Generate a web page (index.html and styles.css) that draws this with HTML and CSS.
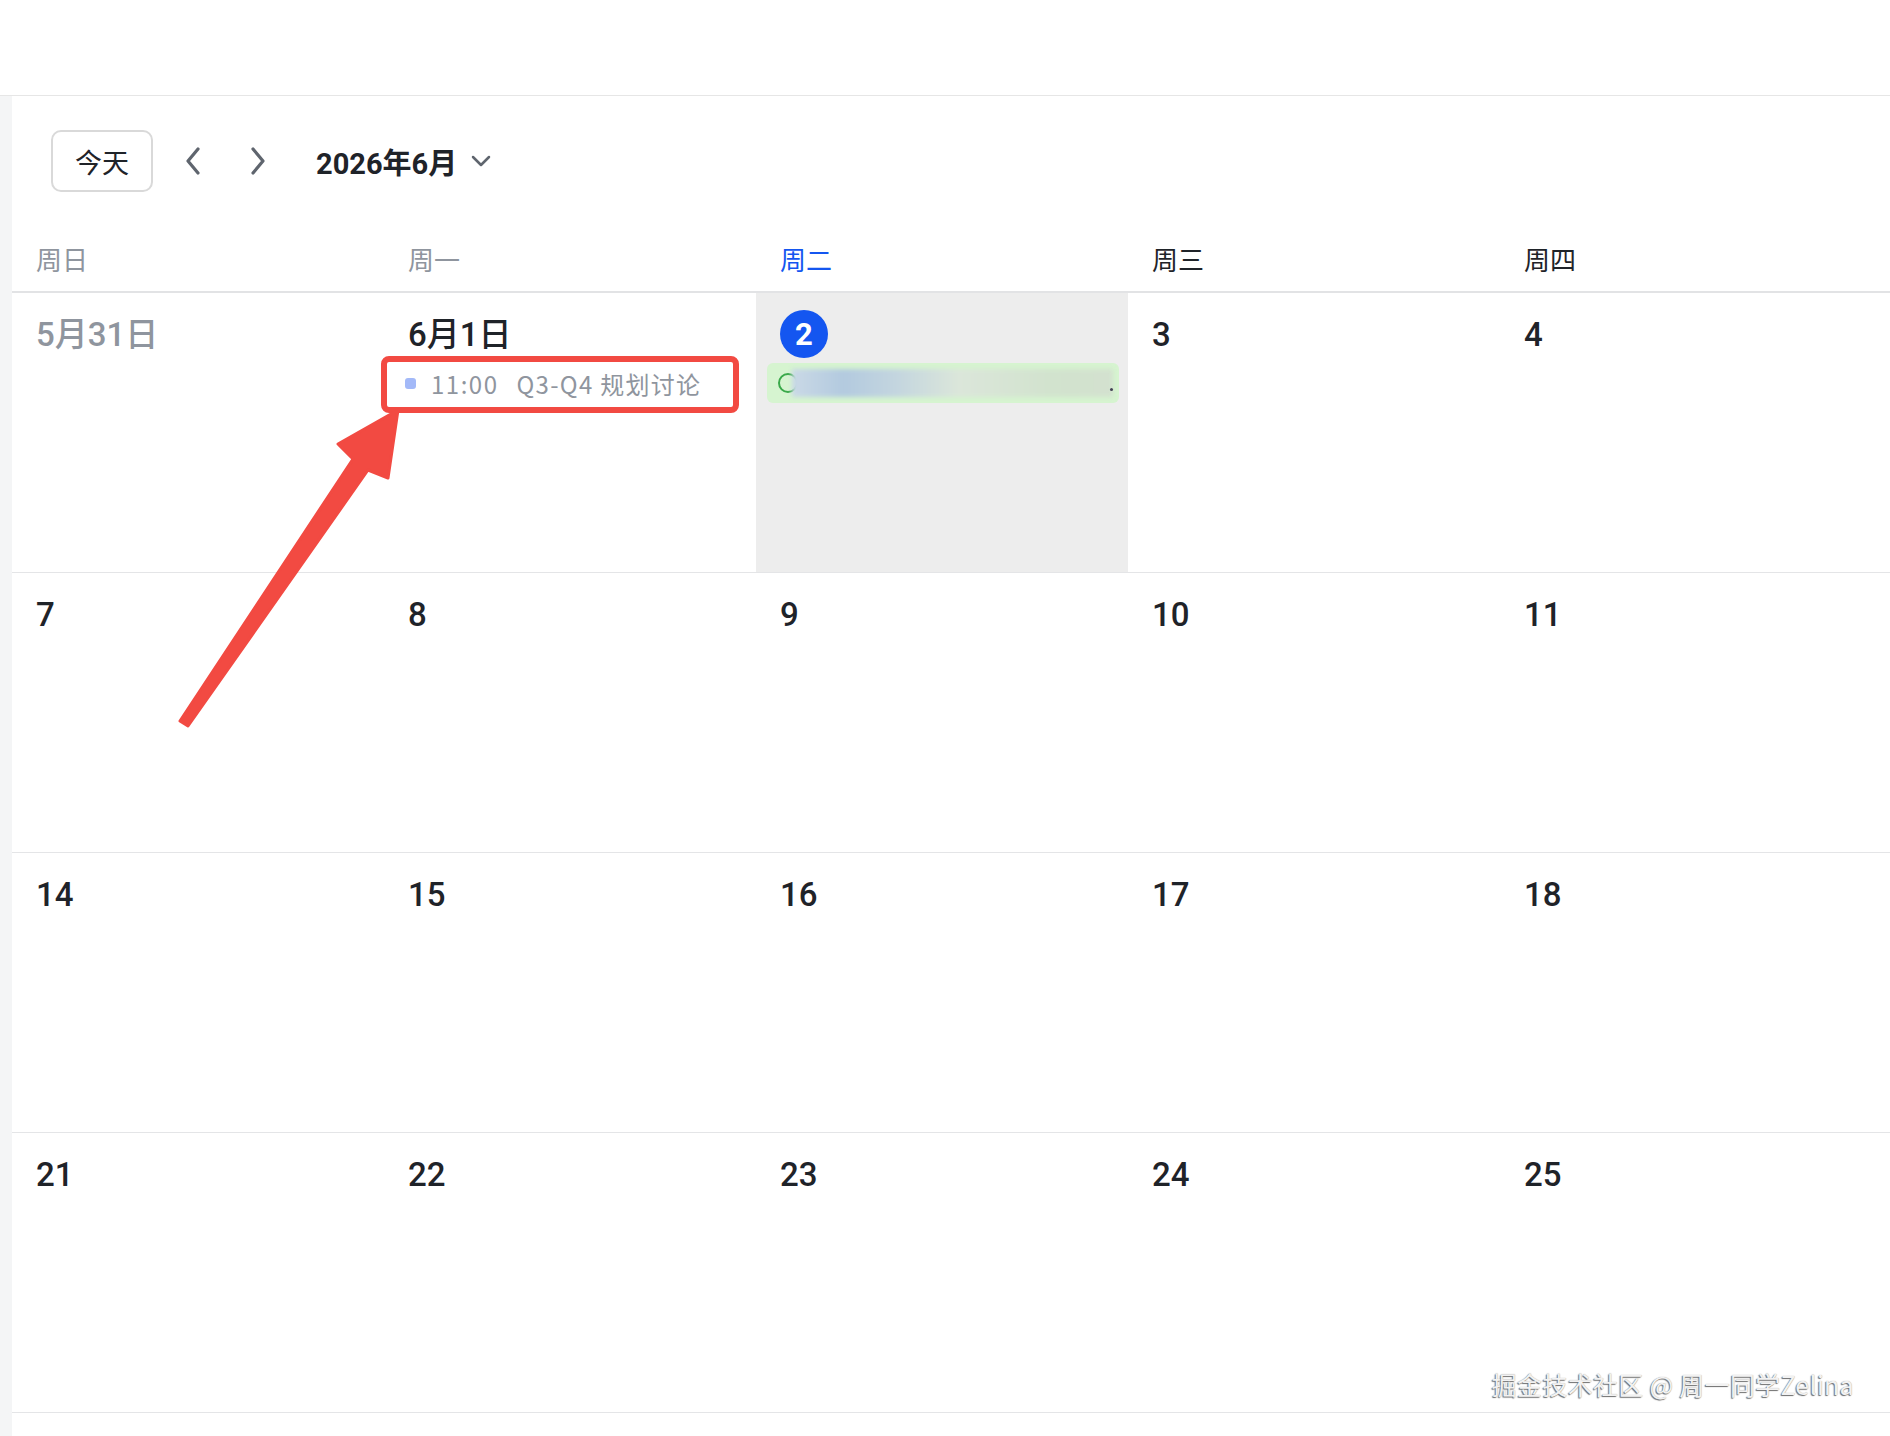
FILE: index.html
```html
<!DOCTYPE html>
<html lang="zh-CN">
<head>
  <meta charset="UTF-8" />
  <meta name="viewport" content="width=device-width, initial-scale=1.0" />
  <title>日历 - 2026年6月</title>
  <link rel="stylesheet" href="styles.css">
</head>
<body>
  <div class="topbar"></div>

  <div class="layout">
    <aside class="rail"></aside>

    <main class="calendar">
      <div class="toolbar">
        <button class="today-btn">今天</button>
        <button class="nav-btn" aria-label="上个月">
          <svg width="16" height="28" viewBox="0 0 16 28"><path d="M13 2 L3 14 L13 26" /></svg>
        </button>
        <button class="nav-btn" aria-label="下个月">
          <svg width="16" height="28" viewBox="0 0 16 28"><path d="M3 2 L13 14 L3 26" /></svg>
        </button>
        <div class="month-title">
          <span class="num">2026年6月</span>
          <svg width="20" height="12" viewBox="0 0 20 12"><path d="M2 2 L10 10 L18 2" /></svg>
        </div>
      </div>

      <div class="week-head">
        <div class="wd muted">周日</div>
        <div class="wd muted">周一</div>
        <div class="wd current">周二</div>
        <div class="wd">周三</div>
        <div class="wd">周四</div>
        <div class="wd">周五</div>
        <div class="wd">周六</div>
      </div>

      <div class="month">
        <div class="week">
          <div class="cell"><div class="day num muted">5月31日</div></div>
          <div class="cell">
            <div class="day num">6月1日</div>
            <div class="event past">
              <span class="dot"></span>
              <span class="ev-time">11:00</span>
              <span class="ev-title">Q3-Q4 规划讨论</span>
            </div>
          </div>
          <div class="cell today">
            <div class="day"><span class="badge num">2</span></div>
            <div class="event green">
              <span class="ring"></span>
              <span class="smudge"></span>
            </div>
          </div>
          <div class="cell"><div class="day num">3</div></div>
          <div class="cell"><div class="day num">4</div></div>
          <div class="cell"><div class="day num">5</div></div>
          <div class="cell"><div class="day num">6</div></div>
        </div>
        <div class="week">
          <div class="cell"><div class="day num">7</div></div>
          <div class="cell"><div class="day num">8</div></div>
          <div class="cell"><div class="day num">9</div></div>
          <div class="cell"><div class="day num">10</div></div>
          <div class="cell"><div class="day num">11</div></div>
          <div class="cell"><div class="day num">12</div></div>
          <div class="cell"><div class="day num">13</div></div>
        </div>
        <div class="week">
          <div class="cell"><div class="day num">14</div></div>
          <div class="cell"><div class="day num">15</div></div>
          <div class="cell"><div class="day num">16</div></div>
          <div class="cell"><div class="day num">17</div></div>
          <div class="cell"><div class="day num">18</div></div>
          <div class="cell"><div class="day num">19</div></div>
          <div class="cell"><div class="day num">20</div></div>
        </div>
        <div class="week">
          <div class="cell"><div class="day num">21</div></div>
          <div class="cell"><div class="day num">22</div></div>
          <div class="cell"><div class="day num">23</div></div>
          <div class="cell"><div class="day num">24</div></div>
          <div class="cell"><div class="day num">25</div></div>
          <div class="cell"><div class="day num">26</div></div>
          <div class="cell"><div class="day num">27</div></div>
        </div>
      </div>
    </main>
  </div>

  <!-- 标注：红框 + 箭头 -->
  <div class="highlight"></div>
  <svg class="arrow" width="1890" height="1436" viewBox="0 0 1890 1436">
    <polygon points="398,410 388,478 368,470 188,726 180,721 353,459 338,444" />
  </svg>

  <div class="watermark">掘金技术社区 @ 周一同学Zelina</div>
</body>
</html>
```

FILE: styles.css
```css
* {
  box-sizing: border-box;
}
body {
  margin: 0;
  width: 1890px;
  height: 1436px;
  overflow: hidden;
  background: #fff;
  color: #1f2329;
  font-family: "Noto Sans CJK SC", sans-serif;
  position: relative;
}
.num {
  font-family: Roboto, "Noto Sans CJK SC", sans-serif;
}
.topbar {
  height: 96px;
  border-bottom: 1px solid #e6e6e6;
}
.layout {
  display: flex;
  height: 1340px;
}
.rail {
  width: 12px;
  flex-shrink: 0;
  background: #f4f5f6;
}
.calendar {
  flex: 1;
  overflow: hidden;
}

/* toolbar */
.toolbar {
  height: 130px;
  display: flex;
  align-items: center;
  padding-left: 39px;
}
.today-btn {
  width: 102px;
  height: 62px;
  border: 2px solid #d9d9d9;
  border-radius: 10px;
  background: #fff;
  font-family: inherit;
  font-size: 27px;
  color: #1f2329;
  padding: 0;
}
.nav-btn {
  width: 40px;
  height: 40px;
  border: none;
  background: none;
  padding: 0;
  display: flex;
  align-items: center;
  justify-content: center;
}
.today-btn + .nav-btn {
  margin-left: 20px;
}
.nav-btn + .nav-btn {
  margin-left: 25px;
}
.nav-btn path,
.month-title path {
  fill: none;
  stroke: #5f656e;
  stroke-width: 3.2;
  stroke-linecap: round;
  stroke-linejoin: round;
}
.month-title {
  margin-left: 38px;
  display: flex;
  align-items: center;
  gap: 14px;
}
.month-title .num {
  font-size: 29px;
  font-weight: 700;
}
.month-title path {
  stroke-width: 2.5;
}

/* weekday header */
.week-head {
  display: grid;
  grid-template-columns: repeat(7, 372px);
  height: 67px;
  align-items: center;
  border-bottom: 2px solid #e2e3e5;
}
.wd {
  padding-left: 24px;
  font-size: 26px;
  color: #1f2329;
}
.wd.muted {
  color: #8f959e;
}
.wd.current {
  color: #1456f0;
}

/* month grid */
.week {
  display: grid;
  grid-template-columns: repeat(7, 372px);
  height: 280px;
  border-bottom: 1px solid #e4e5e7;
}
.cell {
  padding-top: 17px;
}
.cell.today {
  background: #ededed;
}
.day {
  height: 48px;
  display: flex;
  align-items: center;
  padding-left: 24px;
  font-size: 33px;
  font-weight: 500;
  line-height: 1;
  color: #1f2329;
}
.day.muted {
  color: #8f959e;
}
.badge {
  display: flex;
  align-items: center;
  justify-content: center;
  width: 48px;
  height: 48px;
  border-radius: 50%;
  background: #1456f0;
  color: #fff;
  font-size: 31px;
  font-weight: 700;
}

/* events */
.event {
  height: 40px;
  margin: 5px 9px 0 11px;
  border-radius: 6px;
  display: flex;
  align-items: center;
  padding-left: 10px;
  font-size: 24px;
  white-space: nowrap;
  overflow: hidden;
}
.event.past {
  color: #8f959e;
}
.dot {
  width: 11px;
  height: 11px;
  border-radius: 3px;
  background: #a3b9f8;
  margin-right: 15px;
}
.ev-time {
  letter-spacing: 1.5px;
  margin-right: 18px;
}
.ev-title {
  letter-spacing: 1.3px;
}
.event.green {
  background: #d6f4d0;
  padding-left: 11px;
  position: relative;
}
.ring {
  width: 20px;
  height: 20px;
  border: 2px solid #3aa94a;
  border-radius: 50%;
  flex-shrink: 0;
}
.smudge {
  height: 28px;
  flex: 1;
  margin: 0 6px 0 -6px;
  background: linear-gradient(90deg, #cad9e6 0%, #b3cadf 16%, #c3d5df 32%, #dbe6da 52%, #d2e3ce 80%, #d3e1cf 100%);
  filter: blur(2px);
}
.event.green::after {
  content: "";
  position: absolute;
  right: 6px;
  top: 25px;
  width: 3px;
  height: 3px;
  border-radius: 50%;
  background: #445;
}

/* annotations */
.highlight {
  position: absolute;
  left: 381px;
  top: 356px;
  width: 358px;
  height: 57px;
  border: 6px solid #f24a42;
  border-radius: 8px;
}
.arrow {
  position: absolute;
  left: 0;
  top: 0;
  pointer-events: none;
}
.arrow polygon {
  fill: #f24a42;
  stroke: #f24a42;
  stroke-width: 3;
  stroke-linejoin: round;
}
.watermark {
  position: absolute;
  right: 36px;
  top: 1366px;
  font-size: 25px;
  color: #f2f2f2;
  text-shadow: -1px 1px 1px #6d6d6d, 0 0 1px #999;
  letter-spacing: 0.3px;
}
```
